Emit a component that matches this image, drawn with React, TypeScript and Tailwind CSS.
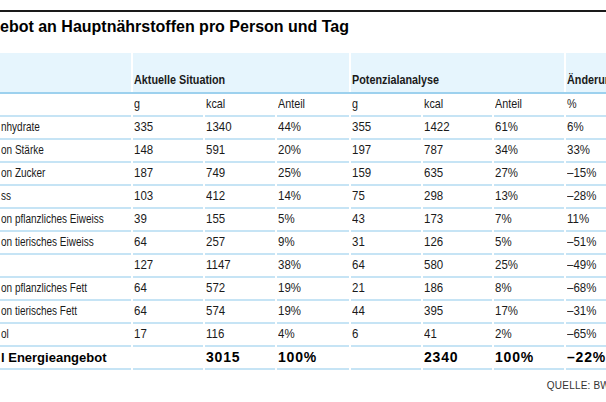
import { Fragment } from "react";

type Row = { label: string; cells: string[] };

const rows: Row[] = [
  { label: "nhydrate", cells: ["335", "1340", "44%", "355", "1422", "61%", "6%"] },
  { label: "on Stärke", cells: ["148", "591", "20%", "197", "787", "34%", "33%"] },
  { label: "on Zucker", cells: ["187", "749", "25%", "159", "635", "27%", "–15%"] },
  { label: "ss", cells: ["103", "412", "14%", "75", "298", "13%", "–28%"] },
  { label: "on pflanzliches Eiweiss", cells: ["39", "155", "5%", "43", "173", "7%", "11%"] },
  { label: "on tierisches Eiweiss", cells: ["64", "257", "9%", "31", "126", "5%", "–51%"] },
  { label: "", cells: ["127", "1147", "38%", "64", "580", "25%", "–49%"] },
  { label: "on pflanzliches Fett", cells: ["64", "572", "19%", "21", "186", "8%", "–68%"] },
  { label: "on tierisches Fett", cells: ["64", "574", "19%", "44", "395", "17%", "–31%"] },
  { label: "ol", cells: ["17", "116", "4%", "6", "41", "2%", "–65%"] },
];

const grid = "grid grid-cols-[131px_70px_70px_72px_70px_69px_70px_1fr] gap-x-[2px]";
const cell = "h-[23px] border-b-2 border-[#c6e4f5] flex items-center pl-[1px] whitespace-nowrap overflow-hidden";
// the print font is a condensed grotesque, narrowed here from Liberation Sans
const label = "inline-block origin-left scale-x-[0.74] whitespace-nowrap";
const num = "inline-block origin-left scale-x-[0.85] whitespace-nowrap";
const head = "inline-block origin-left scale-x-[0.8] whitespace-nowrap";

export default function App() {
  return (
    <div className="w-[606px] h-[402px] overflow-hidden bg-white text-[#1a1a1a]">
      <div className="pt-[10px]">
        <div className="h-[2px] bg-[#1a1a1a]" />
        <h1 className="mt-[5px] font-['Liberation_Sans',Arial,sans-serif] font-bold text-[16px] leading-[20px] text-black whitespace-nowrap">
          ebot an Hauptnährstoffen pro Person und Tag
        </h1>

        <div className="mt-[16px] font-['Liberation_Sans',Arial,sans-serif] text-[13.5px]">
          <div className={grid}>
            <div className="h-[39px] bg-[#e6f5fd]" />
            <div className="col-span-3 h-[39px] bg-[#e6f5fd] flex items-end pb-[2px] pl-[1px] font-bold">
              <span className={head}>Aktuelle Situation</span>
            </div>
            <div className="col-span-3 h-[39px] bg-[#e6f5fd] flex items-end pb-[2px] pl-[1px] font-bold">
              <span className={head}>Potenzialanalyse</span>
            </div>
            <div className="h-[39px] bg-[#e6f5fd] flex items-end pb-[2px] pl-[1px] font-bold overflow-hidden">
              <span className={head}>Änderung</span>
            </div>
          </div>
          <div className="h-[2px] bg-[#9dd1ee]" />

          <div className={grid}>
            <div className={cell} />
            {["g", "kcal", "Anteil", "g", "kcal", "Anteil", "%"].map((h, i) => (
              <div key={i} className={cell}>
                <span className={head}>{h}</span>
              </div>
            ))}
            {rows.map((r, ri) => (
              <Fragment key={ri}>
                <div className={cell}>
                  <span className={label}>{r.label}</span>
                </div>
                {r.cells.map((c, ci) => (
                  <div key={ci} className={cell}>
                    <span className={num}>{c}</span>
                  </div>
                ))}
              </Fragment>
            ))}
            <div className={cell + " font-bold text-[13px] text-black"}>l Energieangebot</div>
            {["", "3015", "100%", "", "2340", "100%", "–22%"].map((c, i) => (
              <div key={"t" + i} className={cell + " font-bold text-[14px] tracking-[0.8px] text-black"}>{c}</div>
            ))}
          </div>
        </div>

        <div className="flex justify-end mt-[8px] -mr-[4px] font-['Liberation_Sans',Arial,sans-serif] text-[10px] text-[#333] tracking-[0.2px] whitespace-nowrap">
          QUELLE: BW
        </div>
      </div>
    </div>
  );
}
